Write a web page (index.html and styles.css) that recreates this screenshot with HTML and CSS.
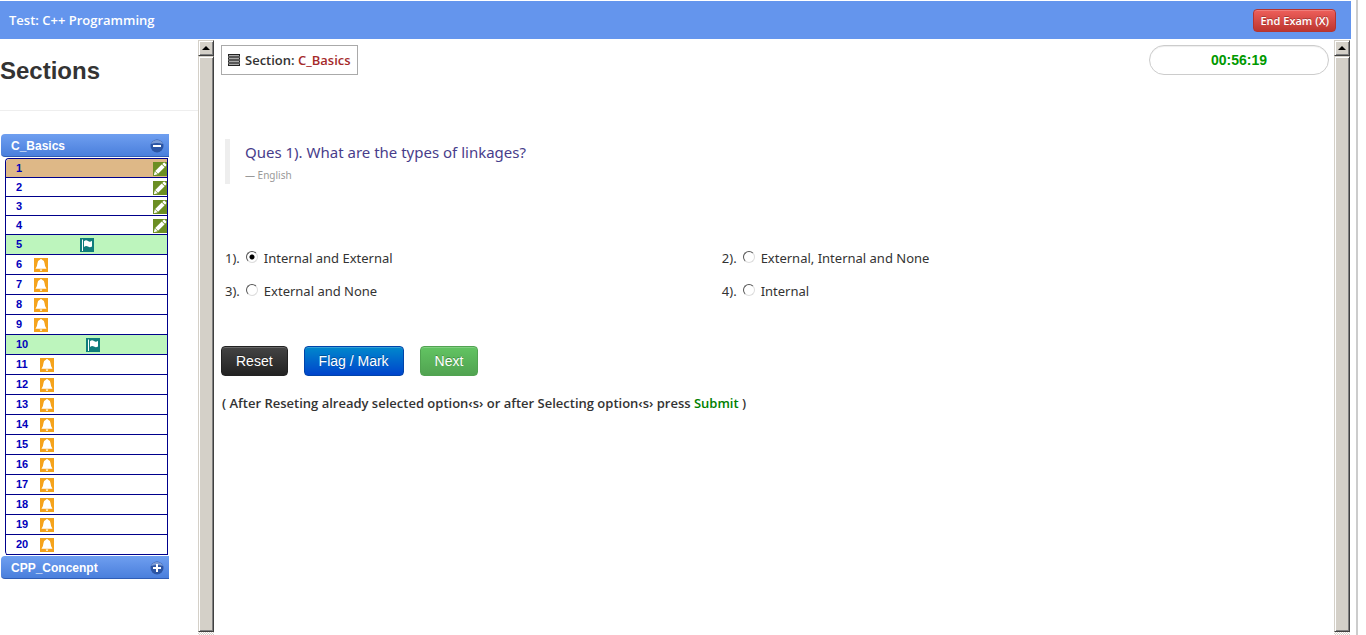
FILE: index.html
```html
<!DOCTYPE html>
<html lang="en">
<head>
<meta charset="utf-8">
<title>Test: C++ Programming</title>
<link rel="stylesheet" href="styles.css">
</head>
<body>
<svg class="sprites" aria-hidden="true">
  <symbol id="pencil" viewBox="0 0 14 14">
    <rect width="14" height="14" fill="#6b8e23"/>
    <path d="M.8 13.200 1.800 9.300 4.700 12.200Z" fill="#fff"/>
    <path d="M2.200 8.900 8.700 2.400 11.600 5.300 5.100 11.800Z" fill="#fff"/>
    <path d="M9.300 1.900 10.400.9Q11.200.3 11.900 1L13.100 2.200Q13.700 2.900 13.100 3.600L12.100 4.700Z" fill="#fff"/>
  </symbol>
  <symbol id="flag" viewBox="0 0 14 14">
    <rect width="14" height="14" fill="#107c7c"/>
    <path d="M2.500 1.500V13" stroke="#fff" stroke-width="1"/>
    <path d="M4 3.200Q6 1.600 8 3.100T12 2.800V8.500Q10 10 8 8.600T4 9Z" fill="#fff"/>
  </symbol>
  <symbol id="bell" viewBox="0 0 14 14">
    <rect width="14" height="14" fill="#f5a31c"/>
    <path d="M7 1Q7.900 1 8.100 1.700Q10.500 2.500 10.600 5.500Q10.700 8.600 12.500 10.800H1.500Q3.300 8.600 3.400 5.500Q3.500 2.500 5.900 1.700Q6.100 1 7 1Z" fill="#fff"/>
    <path d="M5.700 11.500H8.300Q8.100 12.900 7 12.900T5.700 11.500Z" fill="#fff"/>
  </symbol>
</svg>
<div class="app">
  <header class="topbar">
    <span class="topbar-title">Test: C++ Programming</span>
    <button class="btn btn-danger" type="button">End Exam (X)</button>
  </header>
  <div class="panes">
    <aside class="sidebar">
      <h1 class="sidebar-title">Sections</h1>
      <nav class="accordion">
        <button class="group" type="button" aria-expanded="true">C_Basics
          <svg class="toggle" viewBox="0 0 14 14" aria-hidden="true"><circle cx="7" cy="7" r="6.500" fill="#2c55a4"/><path d="M1 5A6.500 6.500 0 0 1 13 5Q7 3 1 5Z" fill="#7c9cd6"/><path d="M3 7H11" stroke="#fff" stroke-width="2"/></svg>
        </button>
        <ol class="questions">
          <li class="question answered current"><a href="#q1">1</a><svg class="icon"><use href="#pencil"/></svg></li>
          <li class="question answered"><a href="#q2">2</a><svg class="icon"><use href="#pencil"/></svg></li>
          <li class="question answered"><a href="#q3">3</a><svg class="icon"><use href="#pencil"/></svg></li>
          <li class="question answered"><a href="#q4">4</a><svg class="icon"><use href="#pencil"/></svg></li>
          <li class="question flagged"><a href="#q5">5</a><svg class="icon"><use href="#flag"/></svg></li>
          <li class="question"><a href="#q6">6</a><svg class="icon"><use href="#bell"/></svg></li>
          <li class="question"><a href="#q7">7</a><svg class="icon"><use href="#bell"/></svg></li>
          <li class="question"><a href="#q8">8</a><svg class="icon"><use href="#bell"/></svg></li>
          <li class="question"><a href="#q9">9</a><svg class="icon"><use href="#bell"/></svg></li>
          <li class="question flagged"><a href="#q10">10</a><svg class="icon"><use href="#flag"/></svg></li>
          <li class="question"><a href="#q11">11</a><svg class="icon"><use href="#bell"/></svg></li>
          <li class="question"><a href="#q12">12</a><svg class="icon"><use href="#bell"/></svg></li>
          <li class="question"><a href="#q13">13</a><svg class="icon"><use href="#bell"/></svg></li>
          <li class="question"><a href="#q14">14</a><svg class="icon"><use href="#bell"/></svg></li>
          <li class="question"><a href="#q15">15</a><svg class="icon"><use href="#bell"/></svg></li>
          <li class="question"><a href="#q16">16</a><svg class="icon"><use href="#bell"/></svg></li>
          <li class="question"><a href="#q17">17</a><svg class="icon"><use href="#bell"/></svg></li>
          <li class="question"><a href="#q18">18</a><svg class="icon"><use href="#bell"/></svg></li>
          <li class="question"><a href="#q19">19</a><svg class="icon"><use href="#bell"/></svg></li>
          <li class="question"><a href="#q20">20</a><svg class="icon"><use href="#bell"/></svg></li>
        </ol>
        <button class="group" type="button" aria-expanded="false">CPP_Concenpt
          <svg class="toggle" viewBox="0 0 14 14" aria-hidden="true"><circle cx="7" cy="7" r="6.500" fill="#2c55a4"/><path d="M1 5A6.500 6.500 0 0 1 13 5Q7 3 1 5Z" fill="#7c9cd6"/><path d="M3 7H11M7 3V11" stroke="#fff" stroke-width="2"/></svg>
        </button>
      </nav>
    </aside>
    <div class="scrollbar" aria-hidden="true"><div class="scroll-up"></div><div class="scroll-thumb"></div></div>
    <main class="content">
      <div class="status">
        <div class="section-name">
          <svg class="list-icon" viewBox="0 0 12 12" aria-hidden="true"><path d="M0 0H12V12H0Z" fill="#222"/><path d="M1 1.500H11M1 4.500H11M1 7.500H11M1 10.500H11" stroke="#aaa"/><path d="M0 3H12M0 6H12M0 9H12" stroke="#fff" stroke-width=".5"/></svg>
          <span>Section: <span class="name">C_Basics</span></span>
        </div>
        <div class="timer">00:56:19</div>
      </div>
      <blockquote class="prompt">
        <p class="prompt-text">Ques 1). What are the types of linkages?</p>
        <small class="prompt-lang">— English</small>
      </blockquote>
      <form class="answer">
        <div class="options">
          <div class="option">1). <input class="radio" type="radio" name="answer" id="a1" checked><label for="a1">Internal and External</label></div>
          <div class="option">2). <input class="radio" type="radio" name="answer" id="a2"><label for="a2">External, Internal and None</label></div>
          <div class="option">3). <input class="radio" type="radio" name="answer" id="a3"><label for="a3">External and None</label></div>
          <div class="option">4). <input class="radio" type="radio" name="answer" id="a4"><label for="a4">Internal</label></div>
        </div>
        <div class="actions">
          <button class="btn btn-dark" type="reset">Reset</button>
          <button class="btn btn-primary" type="button">Flag / Mark</button>
          <button class="btn btn-success" type="button">Next</button>
        </div>
        <p class="hint">( After Reseting already selected option‹s› or after Selecting option‹s› press <span class="submit">Submit</span> )</p>
      </form>
    </main>
    <div class="scrollbar" aria-hidden="true"><div class="scroll-up"></div><div class="scroll-thumb"></div></div>
  </div>
</div>
</body>
</html>
```
FILE: styles.css
```css
* { box-sizing: border-box; }

body {
  margin: 0;
  background: #fff;
  color: #333;
  font-family: "Trebuchet MS", "Open Sans", sans-serif;
  font-size: 13px;
}

.sprites { display: none; }

.app {
  display: flex;
  flex-direction: column;
  min-height: 100vh;
  margin-right: 8px;
  padding: 1px 5px 0 0;
  border-right: 2px solid #ccc;
}

.topbar {
  display: flex;
  align-items: center;
  justify-content: space-between;
  height: 38px;
  padding: 0 15px 0 9px;
  background: #6495ed;
}

.topbar-title { color: #fff; font-weight: 600; }

.panes { display: flex; flex: 1; padding: 1px 1px 0 0; }

/* Sidebar */
.sidebar { width: 198px; font-family: "Liberation Sans", Arial, sans-serif; }

.sidebar-title {
  margin: 0 0 23px;
  padding: 10px 0 19px;
  border-bottom: 1px solid #eee;
  font-size: 24px;
  line-height: 41px;
}

.accordion { width: 168px; margin-left: 1px; }

.group {
  display: flex;
  align-items: center;
  justify-content: space-between;
  width: 100%;
  height: 23px;
  padding: 2px 5px 0 10px;
  border: 0;
  border-bottom: 1px solid #2f5db5;
  border-radius: 4px 0 0 4px;
  background: linear-gradient(#6f9ff0, #4a7fdc);
  color: #fff;
  font: bold 12px "Liberation Sans", Arial, sans-serif;
}

.toggle { width: 14px; height: 14px; }

.questions {
  margin: 1px 1px 1px 4px;
  padding: 0;
  border: 1px solid #00008b;
  border-bottom: 0;
  border-radius: 4px 0 0 4px;
  list-style: none;
}

.question {
  display: flex;
  align-items: center;
  gap: 12px;
  height: 20px;
  padding-left: 10px;
  border-bottom: 1px solid #00008b;
  font-size: 11px;
  font-weight: bold;
}

.question a { padding-bottom: 2px; color: #00b; text-decoration: none; }
.answered { justify-content: space-between; align-items: flex-end; height: 19px; padding-bottom: 1px; }
.answered a { align-self: center; padding-bottom: 0; }
.flagged { gap: 58px; background: #bdf5bd; }
.current { border-radius: 4px 0 0 0; background: #deb887; }
.icon { width: 14px; height: 14px; }

/* Classic scroll bars */
.scrollbar {
  display: flex;
  flex-direction: column;
  width: 16px;
  padding-bottom: 3px;
  background: repeating-conic-gradient(#d4d0c8 0 25%, #fff 0 50%) 0 0 / 2px 2px;
}

.scroll-up, .scroll-thumb {
  border: 1px solid;
  border-color: #d4d0c8 #404040 #404040 #d4d0c8;
  background: #d4d0c8;
  box-shadow: inset 1px 1px #fff, inset -1px -1px #808080;
}

.scroll-up { display: grid; place-items: center; height: 16px; }

.scroll-up::before {
  content: "";
  border: 4px solid transparent;
  border-top: 0;
  border-bottom-color: #000;
}

.scroll-thumb { flex: 1; }

/* Question pane */
.content { flex: 1; padding: 5px 5px 0 7px; }

.status { display: flex; justify-content: space-between; }

.section-name {
  display: flex;
  align-items: center;
  gap: 5px;
  height: 30px;
  padding: 0 6px;
  border: 1px solid #aaa;
  font-weight: 600;
}

.list-icon { width: 12px; height: 12px; }
.name { color: #a52a2a; }

.timer {
  width: 180px;
  height: 30px;
  border: 1px solid #ccc;
  border-radius: 15px;
  box-shadow: inset 0 1px 1px #eee;
  color: #090;
  font: bold 14px/28px "Liberation Sans", Arial, sans-serif;
  text-align: center;
}

.prompt {
  margin: 64px 0 0 4px;
  padding-left: 15px;
  border-left: 5px solid #eee;
  font-family: "Trebuchet MS", "Noto Sans", sans-serif;
}

.prompt-text { margin: 0; color: #483d8b; font-size: 15px; line-height: 27px; }
.prompt-lang { display: block; color: #999; font-size: 10px; line-height: 18px; }

.options {
  display: grid;
  grid-template-columns: 9fr 11fr;
  row-gap: 13px;
  margin: 64px 0 0 4px;
  font-family: "Trebuchet MS", "Noto Sans", sans-serif;
  line-height: 20px;
}

.option { display: flex; align-items: center; gap: 6px; }

.radio {
  width: 12px;
  height: 12px;
  margin: 0 0 2px;
  border: 1px solid;
  border-color: #555 #ddd #ddd #555;
  border-radius: 50%;
  background: #fff;
  appearance: none;
}

.radio:checked { background: radial-gradient(circle, #000 2px, #fff 3px); }

.actions { display: flex; gap: 16px; margin-top: 45px; }

.btn {
  height: 30px;
  padding: 0 14px;
  border: 1px solid;
  border-radius: 4px;
  color: #fff;
  font: 14px "Liberation Sans", Arial, sans-serif;
  text-shadow: 0 -1px #0004;
  box-shadow: inset 0 1px #fff3;
}

.btn-dark { border-color: #222; background: linear-gradient(#444, #222); }
.btn-primary { border-color: #04a; background: linear-gradient(#08c, #04c); }
.btn-success { border-color: #51a351; background: linear-gradient(#62c462, #51a351); }

.btn-danger {
  height: 23px;
  padding: 0 6px;
  border-color: #b43530;
  background: linear-gradient(#ee5f5b, #bd362f);
  font: 600 11px "Trebuchet MS", "Open Sans", sans-serif;
}

.hint { margin: 17px 0 0 1px; font-weight: 600; line-height: 20px; }
.submit { color: #008000; }
```
